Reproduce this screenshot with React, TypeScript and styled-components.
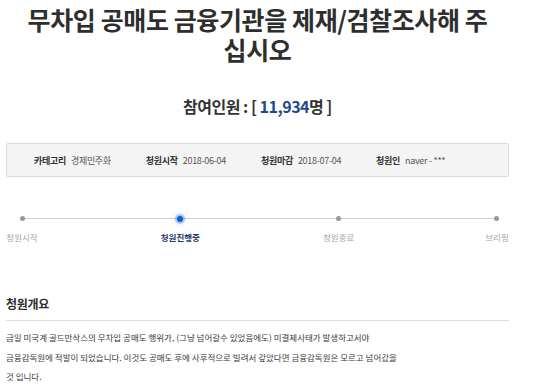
import React from 'react';
import styled, { createGlobalStyle } from 'styled-components';

const GlobalStyle = createGlobalStyle`
  html, body {
    margin: 0;
    padding: 0;
    background: #ffffff;
  }
  body {
    font-family: "Noto Sans CJK KR", "Noto Sans", sans-serif;
    color: #333333;
  }
`;

const Page = styled.div`
  width: 503px;
  margin-left: 6px;
  padding-top: 4px;
`;

const Title = styled.h1`
  margin: 0;
  font-size: 25px;
  line-height: 30px;
  font-weight: 700;
  letter-spacing: -0.4px;
  word-break: keep-all;
  text-align: center;
  color: #2e2e2e;
`;

const Count = styled.div`
  margin-top: 32px;
  font-size: 16px;
  line-height: 20px;
  font-weight: 700;
  letter-spacing: -0.5px;
  text-align: center;
  color: #333333;
`;

const Number = styled.span`
  color: #1c4a8c;
`;

const InfoBox = styled.div`
  margin-top: 27px;
  height: 32px;
  display: flex;
  align-items: center;
  padding-left: 27px;
  background: #f4f4f4;
  border: 1px solid #dadada;
  border-radius: 2px;
  font-size: 9px;
  letter-spacing: -0.3px;
`;

const InfoItem = styled.div`
  display: flex;
  align-items: center;
  margin-right: 35px;
  white-space: nowrap;
`;

const InfoLabel = styled.span`
  font-weight: 700;
  color: #333333;
  margin-right: 5px;
`;

const InfoValue = styled.span`
  color: #555555;
`;

const Steps = styled.div`
  position: relative;
  margin-top: 38px;
  padding-left: 4px;
  display: flex;
  justify-content: space-between;

  &::before {
    content: "";
    position: absolute;
    top: 3px;
    left: 16px;
    right: 12px;
    height: 1px;
    background: #cfcfcf;
  }
`;

const Step = styled.div`
  position: relative;
  width: 24px;
  display: flex;
  flex-direction: column;
  align-items: center;
`;

const DotWrap = styled.div`
  height: 7px;
  display: flex;
  align-items: center;
  justify-content: center;
`;

const Dot = styled.span<{ $active?: boolean }>`
  display: block;
  width: ${({ $active }) => ($active ? '6px' : '5px')};
  height: ${({ $active }) => ($active ? '6px' : '5px')};
  border-radius: 50%;
  background: ${({ $active }) => ($active ? '#0c5fd0' : '#999999')};
  box-shadow: ${({ $active }) => ($active ? '0 0 0 2px rgba(12, 95, 208, 0.25), 0 0 4px 2px rgba(12, 95, 208, 0.2)' : 'none')};
`;

const StepLabel = styled.span<{ $active?: boolean }>`
  margin-top: 8px;
  font-size: 8.5px;
  line-height: 14px;
  white-space: nowrap;
  font-weight: ${({ $active }) => ($active ? 700 : 400)};
  color: ${({ $active }) => ($active ? '#1d3c6c' : '#a5a5a5')};
`;

const SectionTitle = styled.h2`
  margin: 52px 0 0;
  padding-bottom: 8px;
  border-bottom: 1px solid #dddddd;
  font-size: 12px;
  line-height: 16px;
  font-weight: 700;
  letter-spacing: -0.3px;
  color: #2e2e2e;
`;

const Body = styled.p`
  margin: 7px 0 0;
  font-size: 8.5px;
  line-height: 19.5px;
  color: #3a3a3a;
`;

type StepItem = { label: string; active?: boolean };

const steps: StepItem[] = [
  { label: '청원시작' },
  { label: '청원진행중', active: true },
  { label: '청원종료' },
  { label: '브리핑' },
];

const info = [
  { label: '카테고리', value: '경제민주화' },
  { label: '청원시작', value: '2018-06-04' },
  { label: '청원마감', value: '2018-07-04' },
  { label: '청원인', value: 'naver - ***' },
];

const App = () => {
  return (
    <>
      <GlobalStyle />
      <Page>
        <Title>무차입 공매도 금융기관을 제재/검찰조사해 주 십시오</Title>
        <Count>
          참여인원 : [ <Number>11,934</Number>명 ]
        </Count>
        <InfoBox>
          {info.map((item) => (
            <InfoItem key={item.label}>
              <InfoLabel>{item.label}</InfoLabel>
              <InfoValue>{item.value}</InfoValue>
            </InfoItem>
          ))}
        </InfoBox>
        <Steps>
          {steps.map((step) => (
            <Step key={step.label}>
              <DotWrap>
                <Dot $active={step.active} />
              </DotWrap>
              <StepLabel $active={step.active}>{step.label}</StepLabel>
            </Step>
          ))}
        </Steps>
        <SectionTitle>청원개요</SectionTitle>
        <Body>
          금일 미국계 골드만삭스의 무차입 공매도 행위가, (그냥 넘어갈수 있었음에도) 미결제사태가 발생하고서야
          <br />
          금융감독원에 적발이 되었습니다. 이것도 공매도 후에 사후적으로 빌려서 갚았다면 금융감독원은 모르고 넘어갔을
          <br />
          것 입니다.
        </Body>
      </Page>
    </>
  );
};

export default App;
